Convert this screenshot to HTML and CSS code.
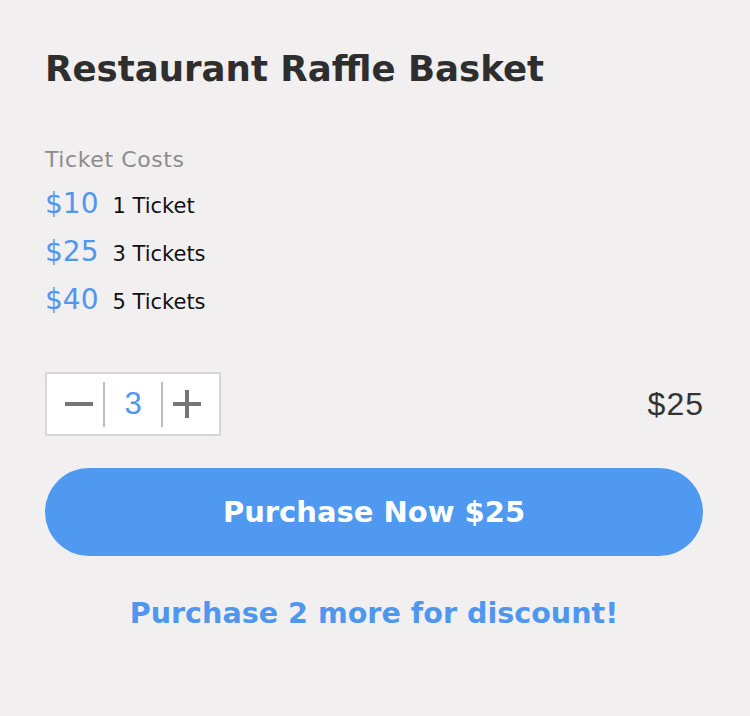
FILE: index.html
```html
<!DOCTYPE html>
<html>
<head>
<meta charset="utf-8">
<link rel="stylesheet" href="styles.css">
</head>
<body>
<main class="card">
  <h1 class="title">Restaurant Raffle Basket</h1>
  <section class="costs">
    <div class="costs-label">Ticket Costs</div>
    <div class="cost-row"><span class="price">$10</span><span class="qty">1 Ticket</span></div>
    <div class="cost-row"><span class="price">$25</span><span class="qty">3 Tickets</span></div>
    <div class="cost-row"><span class="price">$40</span><span class="qty">5 Tickets</span></div>
  </section>
  <div class="order-row">
    <div class="stepper">
      <button class="step-btn" aria-label="decrease">
        <svg width="28" height="28" viewBox="0 0 28 28"><rect x="0" y="12" width="28" height="4" fill="#767676"/></svg>
      </button>
      <span class="step-divider"></span>
      <span class="step-value">3</span>
      <span class="step-divider"></span>
      <button class="step-btn" aria-label="increase">
        <svg width="28" height="28" viewBox="0 0 28 28"><rect x="0" y="12" width="28" height="4" fill="#767676"/><rect x="12" y="0" width="4" height="28" fill="#767676"/></svg>
      </button>
    </div>
    <div class="total">$25</div>
  </div>
  <button class="purchase">Purchase Now $25</button>
  <p class="discount">Purchase 2 more for discount!</p>
</main>
</body>
</html>
```
FILE: styles.css
```css
* { box-sizing: border-box; }
html, body { margin: 0; padding: 0; background: #f1eff0; }
body { font-family: "DejaVu Sans", "Open Sans", sans-serif; }
.card { padding: 44px 47px 40px 45px; width: 750px; }
.title {
  margin: 0;
  font-size: 35.6px;
  font-weight: 700;
  color: #2e2e2e;
  line-height: 50px;
}
.costs { margin-top: 52px; }
.costs-label { font-size: 22px; color: #8c8c8c; line-height: 28px; letter-spacing: 0.6px; }
.cost-row { display: flex; align-items: baseline; height: 48px; line-height: 48px; }
.costs-label + .cost-row { margin-top: 6px; }
.price { font-size: 28px; color: #4f97ee; margin-right: 14px; }
.qty { font-size: 21px; color: #111; }
.order-row { display: flex; align-items: center; justify-content: space-between; margin-top: 48px; }
.stepper {
  display: flex; align-items: center;
  width: 176px; height: 64px;
  border: 2px solid #d6d6d6; background: #fff;
  padding: 0 18px 0 18px;
}
.step-btn { border: 0; background: none; padding: 0; width: 28px; height: 28px; display: flex; }
.step-divider { width: 2px; height: 45px; background: #bdbdbd; margin: 0 10px; }
.step-value { flex: 1; text-align: center; font-family: "Liberation Sans", Arial, sans-serif; font-size: 31px; color: #4f97ee; }
.total { font-family: "Liberation Sans", Arial, sans-serif; font-size: 32px; letter-spacing: 1px; color: #333; margin-right: -1px; }
.purchase {
  display: block; width: 658px; height: 88px; margin-top: 32px;
  border: 0; border-radius: 44px; background: #4f99f1; color: #fff;
  font-family: inherit; font-size: 29px; font-weight: 700;
}
.discount { margin: 37px 0 0; text-align: center; font-size: 28.6px; font-weight: 700; color: #4f97ee; line-height: 40px; }
```
